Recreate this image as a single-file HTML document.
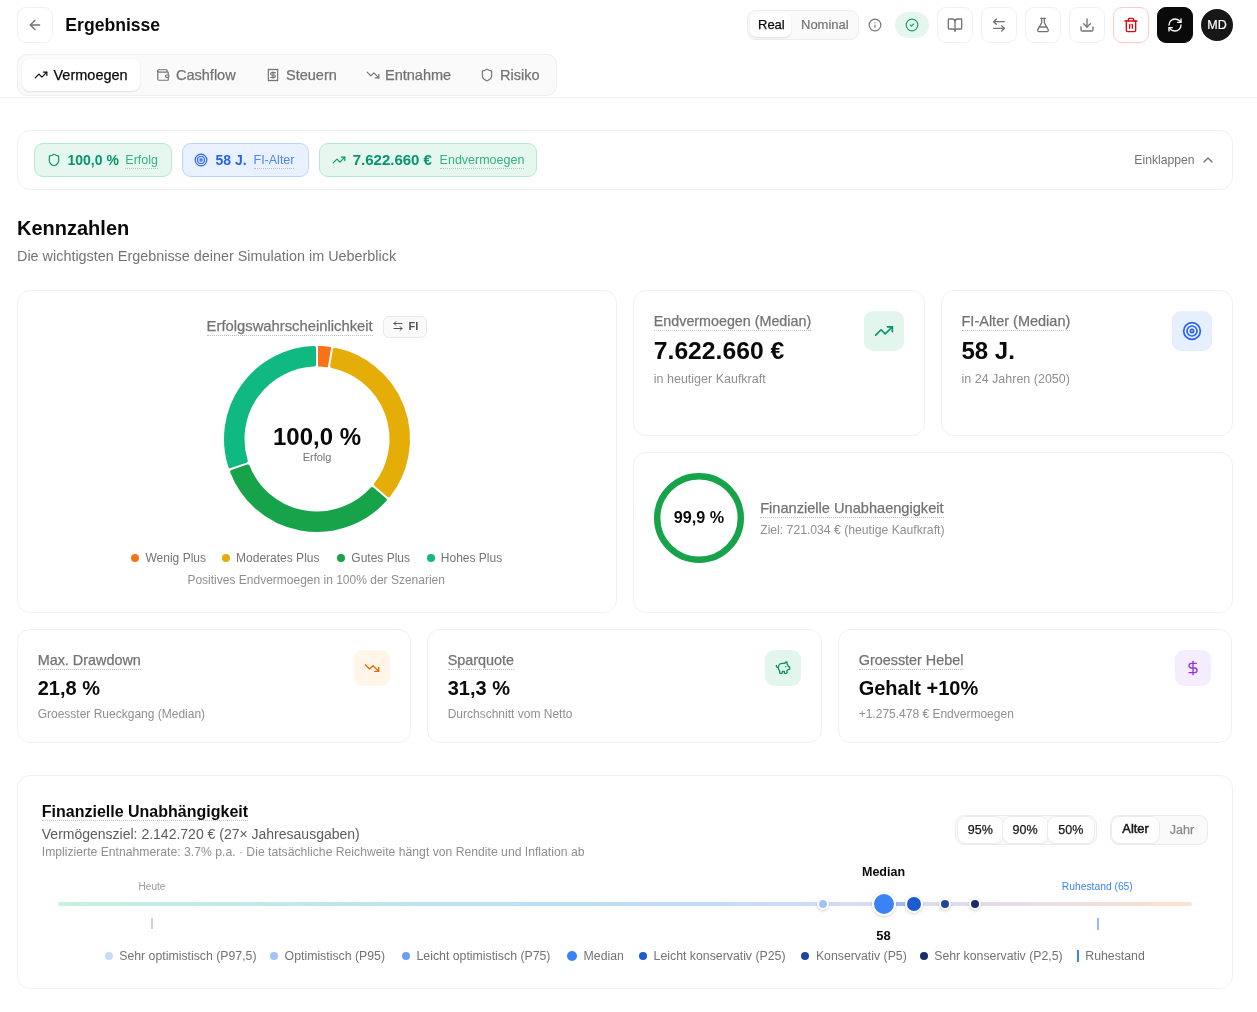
<!DOCTYPE html>
<html lang="de">
<head>
<meta charset="utf-8">
<style>
*{box-sizing:border-box;margin:0;padding:0}
html,body{width:1257px;height:1012px;overflow:hidden;background:#fff}
body{font-family:"Liberation Sans",sans-serif;color:#0a0a0a;position:relative;will-change:transform}
.abs{position:absolute}
svg{display:block}
.ibtn{position:absolute;top:7px;width:36px;height:36px;border:1px solid #f0f0f0;border-radius:9px;background:#fff;display:flex;align-items:center;justify-content:center}
.card{position:absolute;border:1px solid #f0f0f0;border-radius:13px;background:#fff}
.dl{border-bottom:1px dotted #c8c8c8}
.lbl{position:absolute;font-size:14px;color:#737373;white-space:nowrap;line-height:16px}
.val{position:absolute;font-weight:bold;color:#0a0a0a;white-space:nowrap}
.sub{position:absolute;font-size:12px;color:#8f8f8f;white-space:nowrap}
.ibox{position:absolute;border-radius:9px;display:flex;align-items:center;justify-content:center}
.pill{position:absolute;top:13px;height:33px;border-radius:9px;display:flex;align-items:center;white-space:nowrap}
</style>
</head>
<body>

<!-- HEADER -->
<div class="ibtn" style="left:17px;">
<svg width="16" height="16" viewBox="0 0 24 24" fill="none" stroke="#737373" stroke-width="2" stroke-linecap="round" stroke-linejoin="round"><path d="m12 19-7-7 7-7"/><path d="M19 12H5"/></svg>
</div>
<div class="abs" style="left:65.3px;top:14.2px;font-size:17.6px;font-weight:bold;line-height:22px;">Ergebnisse</div>

<!-- tabs -->
<div class="abs" style="left:17px;top:54px;width:540px;height:42px;border:1px solid #efefef;border-radius:10px;background:#fafafa;"></div>
<div class="abs" style="left:22px;top:59px;width:118px;height:32px;border-radius:8px;background:#fff;box-shadow:0 1px 2px rgba(0,0,0,.1);"></div>
<div class="abs" style="left:0;top:97px;width:1257px;height:1px;background:#f0f0f0;"></div>


<!-- toggle real/nominal -->
<div class="abs" style="left:747px;top:10px;width:112px;height:30px;border:1px solid #ededed;border-radius:9px;background:#fafafa;"></div>
<div class="abs" style="left:750px;top:13px;width:41px;height:24px;border-radius:7px;background:#fff;box-shadow:0 1px 2px rgba(0,0,0,.12);"></div>
<div class="abs" style="left:758px;top:17px;font-size:13px;line-height:16px;color:#0a0a0a;-webkit-text-stroke:0.25px currentColor;">Real</div>
<div class="abs" style="left:801px;top:17px;font-size:13px;line-height:16px;color:#737373;-webkit-text-stroke:0.2px currentColor;">Nominal</div>
<div class="abs" style="left:868px;top:18px;">
<svg width="14" height="14" viewBox="0 0 24 24" fill="none" stroke="#737373" stroke-width="2" stroke-linecap="round" stroke-linejoin="round"><circle cx="12" cy="12" r="10"/><path d="M12 16v-4"/><path d="M12 8h.01"/></svg>
</div>
<div class="abs" style="left:895px;top:12px;width:34px;height:26px;border-radius:13px;background:#e5f6ef;display:flex;align-items:center;justify-content:center;">
<svg width="14" height="14" viewBox="0 0 24 24" fill="none" stroke="#16a06c" stroke-width="2" stroke-linecap="round" stroke-linejoin="round"><circle cx="12" cy="12" r="10"/><path d="m9 12 2 2 4-4"/></svg>
</div>
<div class="ibtn" style="left:937px;">
<svg width="16" height="16" viewBox="0 0 24 24" fill="none" stroke="#737373" stroke-width="2" stroke-linecap="round" stroke-linejoin="round"><path d="M12 7v14"/><path d="M3 18a1 1 0 0 1-1-1V4a1 1 0 0 1 1-1h5a4 4 0 0 1 4 4 4 4 0 0 1 4-4h5a1 1 0 0 1 1 1v13a1 1 0 0 1-1 1h-6a3 3 0 0 0-3 3 3 3 0 0 0-3-3z"/></svg>
</div>
<div class="ibtn" style="left:981px;">
<svg width="16" height="16" viewBox="0 0 24 24" fill="none" stroke="#737373" stroke-width="2" stroke-linecap="round" stroke-linejoin="round"><path d="M8 3 4 7l4 4"/><path d="M4 7h16"/><path d="m16 21 4-4-4-4"/><path d="M20 17H4"/></svg>
</div>
<div class="ibtn" style="left:1025px;">
<svg width="16" height="16" viewBox="0 0 24 24" fill="none" stroke="#737373" stroke-width="2" stroke-linecap="round" stroke-linejoin="round"><path d="M14 2v6a2 2 0 0 0 .245.96l5.51 10.08A2 2 0 0 1 18 22H6a2 2 0 0 1-1.755-2.96l5.51-10.08A2 2 0 0 0 10 8V2"/><path d="M6.453 15h11.094"/><path d="M8.5 2h7"/></svg>
</div>
<div class="ibtn" style="left:1069px;">
<svg width="16" height="16" viewBox="0 0 24 24" fill="none" stroke="#737373" stroke-width="2" stroke-linecap="round" stroke-linejoin="round"><path d="M21 15v4a2 2 0 0 1-2 2H5a2 2 0 0 1-2-2v-4"/><polyline points="7 10 12 15 17 10"/><line x1="12" x2="12" y1="15" y2="3"/></svg>
</div>
<div class="ibtn" style="left:1113px;border-color:#fecaca;">
<svg width="16" height="16" viewBox="0 0 24 24" fill="none" stroke="#e7000b" stroke-width="2" stroke-linecap="round" stroke-linejoin="round"><path d="M3 6h18"/><path d="M19 6v14c0 1-1 2-2 2H7c-1 0-2-1-2-2V6"/><path d="M8 6V4c0-1 1-2 2-2h4c1 0 2 1 2 2v2"/><line x1="10" x2="10" y1="11" y2="17"/><line x1="14" x2="14" y1="11" y2="17"/></svg>
</div>
<div class="ibtn" style="left:1157px;background:#0a0a0a;border-color:#0a0a0a;">
<svg width="16" height="16" viewBox="0 0 24 24" fill="none" stroke="#fff" stroke-width="2" stroke-linecap="round" stroke-linejoin="round"><path d="M3 12a9 9 0 0 1 9-9 9.75 9.75 0 0 1 6.74 2.74L21 8"/><path d="M21 3v5h-5"/><path d="M21 12a9 9 0 0 1-9 9 9.75 9.75 0 0 1-6.74-2.74L3 16"/><path d="M8 16H3v5"/></svg>
</div>
<div class="abs" style="left:1201px;top:9px;width:32px;height:32px;border-radius:50%;background:#171717;color:#fff;font-size:12.5px;line-height:32px;text-align:center;-webkit-text-stroke:0.2px currentColor;">MD</div>

<!-- tab labels -->
<div class="abs" style="left:34px;top:68px;"><svg width="14" height="14" viewBox="0 0 24 24" fill="none" stroke="#0a0a0a" stroke-width="2" stroke-linecap="round" stroke-linejoin="round"><path d="M16 7h6v6"/><path d="m22 7-8.5 8.5-5-5L2 17"/></svg></div>
<div class="abs" style="left:53.5px;top:67px;font-size:14.5px;line-height:17px;-webkit-text-stroke:0.25px currentColor;color:#0a0a0a;">Vermoegen</div>
<div class="abs" style="left:156px;top:68px;"><svg width="14" height="14" viewBox="0 0 24 24" fill="none" stroke="#737373" stroke-width="2" stroke-linecap="round" stroke-linejoin="round"><path d="M19 7V4a1 1 0 0 0-1-1H5a2 2 0 0 0 0 4h15a1 1 0 0 1 1 1v4h-3a2 2 0 0 0 0 4h3a1 1 0 0 0 1-1v-2a1 1 0 0 0-1-1"/><path d="M3 5v14a2 2 0 0 0 2 2h15a1 1 0 0 0 1-1v-4"/></svg></div>
<div class="abs" style="left:176px;top:67px;font-size:14.5px;line-height:17px;-webkit-text-stroke:0.25px currentColor;color:#737373;">Cashflow</div>
<div class="abs" style="left:266px;top:68px;"><svg width="14" height="14" viewBox="0 0 24 24" fill="none" stroke="#737373" stroke-width="2" stroke-linecap="round" stroke-linejoin="round"><path d="M4 2v20l2-1 2 1 2-1 2 1 2-1 2 1 2-1 2 1V2l-2 1-2-1-2 1-2-1-2 1-2-1-2 1Z"/><path d="M16 8h-6a2 2 0 1 0 0 4h4a2 2 0 1 1 0 4H8"/><path d="M12 17.5v-11"/></svg></div>
<div class="abs" style="left:286px;top:67px;font-size:14.5px;line-height:17px;-webkit-text-stroke:0.25px currentColor;color:#737373;">Steuern</div>
<div class="abs" style="left:366px;top:68px;"><svg width="14" height="14" viewBox="0 0 24 24" fill="none" stroke="#737373" stroke-width="2" stroke-linecap="round" stroke-linejoin="round"><path d="M16 17h6v-6"/><path d="m22 17-8.5-8.5-5 5L2 7"/></svg></div>
<div class="abs" style="left:385px;top:67px;font-size:14.5px;line-height:17px;-webkit-text-stroke:0.25px currentColor;color:#737373;">Entnahme</div>
<div class="abs" style="left:480px;top:68px;"><svg width="14" height="14" viewBox="0 0 24 24" fill="none" stroke="#737373" stroke-width="2" stroke-linecap="round" stroke-linejoin="round"><path d="M20 13c0 5-3.5 7.5-7.66 8.95a1 1 0 0 1-.67-.01C7.5 20.5 4 18 4 13V6a1 1 0 0 1 1-1c2 0 4.5-1.2 6.24-2.72a1.17 1.17 0 0 1 1.52 0C14.51 3.81 17 5 19 5a1 1 0 0 1 1 1z"/></svg></div>
<div class="abs" style="left:500px;top:67px;font-size:14.5px;line-height:17px;-webkit-text-stroke:0.25px currentColor;color:#737373;">Risiko</div>


<!-- SUMMARY BAR -->
<div class="card" style="left:17px;top:130px;width:1216px;height:60px;"></div>
<div class="abs" style="left:34px;top:143px;width:138px;height:34px;border:1px solid #b3e9d1;border-radius:9px;background:#e6f7f0;"></div>
<div class="abs" style="left:47px;top:153px;"><svg width="14" height="14" viewBox="0 0 24 24" fill="none" stroke="#059669" stroke-width="2" stroke-linecap="round" stroke-linejoin="round"><path d="M20 13c0 5-3.5 7.5-7.66 8.95a1 1 0 0 1-.67-.01C7.5 20.5 4 18 4 13V6a1 1 0 0 1 1-1c2 0 4.5-1.2 6.24-2.72a1.17 1.17 0 0 1 1.52 0C14.51 3.81 17 5 19 5a1 1 0 0 1 1 1z"/></svg></div>
<div class="abs" style="left:67.5px;top:153px;font-size:14px;line-height:1;color:#059669;white-space:nowrap;font-weight:bold;">100,0 %</div>
<div class="abs" style="left:125.3px;top:154px;font-size:12.5px;line-height:1;color:#34b086;white-space:nowrap;"><span style="border-bottom:1px dotted #a8c9bd;padding-bottom:1px;">Erfolg</span></div>
<div class="abs" style="left:182px;top:143px;width:127px;height:34px;border:1px solid #bcd3fb;border-radius:9px;background:#e9f1fe;"></div>
<div class="abs" style="left:194px;top:153px;"><svg width="14" height="14" viewBox="0 0 24 24" fill="none" stroke="#2563eb" stroke-width="2" stroke-linecap="round" stroke-linejoin="round"><circle cx="12" cy="12" r="10"/><circle cx="12" cy="12" r="6"/><circle cx="12" cy="12" r="2"/></svg></div>
<div class="abs" style="left:215.5px;top:153px;font-size:14px;line-height:1;color:#2563eb;white-space:nowrap;font-weight:bold;">58 J.</div>
<div class="abs" style="left:253.5px;top:154px;font-size:12.5px;line-height:1;color:#4f83f1;white-space:nowrap;"><span style="border-bottom:1px dotted #a9bde8;padding-bottom:1px;">FI-Alter</span></div>
<div class="abs" style="left:319px;top:143px;width:218px;height:34px;border:1px solid #b3e9d1;border-radius:9px;background:#e6f7f0;"></div>
<div class="abs" style="left:331.5px;top:153px;"><svg width="14" height="14" viewBox="0 0 24 24" fill="none" stroke="#059669" stroke-width="2" stroke-linecap="round" stroke-linejoin="round"><path d="M16 7h6v6"/><path d="m22 7-8.5 8.5-5-5L2 17"/></svg></div>
<div class="abs" style="left:352.7px;top:152px;font-size:15px;line-height:1;color:#059669;white-space:nowrap;font-weight:bold;">7.622.660 €</div>
<div class="abs" style="left:439.6px;top:154px;font-size:12.5px;line-height:1;color:#34b086;white-space:nowrap;"><span style="border-bottom:1px dotted #a8c9bd;padding-bottom:1px;">Endvermoegen</span></div>
<div class="abs" style="left:1134.3px;top:154px;font-size:12.2px;line-height:1;color:#737373;white-space:nowrap;">Einklappen</div>
<div class="abs" style="left:1200px;top:152px;"><svg width="16" height="16" viewBox="0 0 24 24" fill="none" stroke="#737373" stroke-width="2" stroke-linecap="round" stroke-linejoin="round"><path d="m18 15-6-6-6 6"/></svg></div>
<div class="abs" style="left:17px;top:218px;font-size:20px;line-height:1;color:#0a0a0a;white-space:nowrap;font-weight:bold;">Kennzahlen</div>
<div class="abs" style="left:17px;top:249px;font-size:14.4px;line-height:1;color:#737373;white-space:nowrap;">Die wichtigsten Ergebnisse deiner Simulation im Ueberblick</div>

<!-- DONUT CARD -->
<div class="card" style="left:17px;top:290px;width:600px;height:323px;"></div>
<div class="abs" style="left:206.6px;top:319px;font-size:14.8px;line-height:1;color:#737373;white-space:nowrap;-webkit-text-stroke:0.25px currentColor;"><span style="border-bottom:1px dotted #bdbdbd;padding-bottom:1px;">Erfolgswahrscheinlichkeit</span></div>
<div class="abs" style="left:383px;top:315.5px;width:44px;height:22px;border:1px solid #e8e8e8;border-radius:6px;background:#fafafa;"></div>
<div class="abs" style="left:392px;top:320px;"><svg width="12" height="12" viewBox="0 0 24 24" fill="none" stroke="#525252" stroke-width="2" stroke-linecap="round" stroke-linejoin="round"><path d="M8 3 4 7l4 4"/><path d="M4 7h16"/><path d="m16 21 4-4-4-4"/><path d="M20 17H4"/></svg></div>
<div class="abs" style="left:408.5px;top:321px;font-size:11px;line-height:1;color:#525252;white-space:nowrap;font-weight:bold;">FI</div>
<svg class="abs" style="left:217px;top:338.7px;" width="200" height="200" viewBox="0 0 200 200"><path d="M101.60 7.61A92.4 92.4 0 0 1 113.51 8.59L110.36 27.64A73.1 73.1 0 0 0 101.60 26.92Z" fill="#f97316" stroke="#f97316" stroke-width="1.2" stroke-linejoin="round"/><path d="M117.81 10.76A91 91 0 0 1 171.60 156.16L158.95 145.55A74.5 74.5 0 0 0 115.12 27.05Z" fill="#e5ad08" stroke="#e5ad08" stroke-width="4" stroke-linejoin="round"/><path d="M167.74 160.76A91 91 0 0 1 15.15 132.89L30.74 127.43A74.5 74.5 0 0 0 155.10 150.15Z" fill="#16a34a" stroke="#16a34a" stroke-width="4" stroke-linejoin="round"/><path d="M13.17 127.23A91 91 0 0 1 97.00 9.05L97.00 25.56A74.5 74.5 0 0 0 28.75 121.77Z" fill="#10b981" stroke="#10b981" stroke-width="4" stroke-linejoin="round"/></svg>
<div class="abs" style="left:17px;width:600px;text-align:center;top:425px;font-size:24px;line-height:1;color:#0a0a0a;white-space:nowrap;font-weight:bold;">100,0 %</div>
<div class="abs" style="left:17px;width:600px;text-align:center;top:452px;font-size:11px;line-height:1;color:#737373;white-space:nowrap;">Erfolg</div>
<div class="abs" style="left:131px;top:554px;width:8px;height:8px;border-radius:50%;background:#f97316;"></div>
<div class="abs" style="left:145.5px;top:552px;font-size:12px;line-height:1;color:#737373;white-space:nowrap;">Wenig Plus</div>
<div class="abs" style="left:222px;top:554px;width:8px;height:8px;border-radius:50%;background:#e5ad08;"></div>
<div class="abs" style="left:236.1px;top:552px;font-size:12px;line-height:1;color:#737373;white-space:nowrap;">Moderates Plus</div>
<div class="abs" style="left:336.5px;top:554px;width:8px;height:8px;border-radius:50%;background:#16a34a;"></div>
<div class="abs" style="left:351.3px;top:552px;font-size:12px;line-height:1;color:#737373;white-space:nowrap;">Gutes Plus</div>
<div class="abs" style="left:426.9px;top:554px;width:8px;height:8px;border-radius:50%;background:#10b981;"></div>
<div class="abs" style="left:440.8px;top:552px;font-size:12px;line-height:1;color:#737373;white-space:nowrap;">Hohes Plus</div>
<div class="abs" style="left:16.19999999999999px;width:600px;text-align:center;top:574px;font-size:12px;line-height:1;color:#8f8f8f;white-space:nowrap;">Positives Endvermoegen in 100% der Szenarien</div>

<!-- RIGHT CARDS -->
<div class="card" style="left:633px;top:290px;width:292px;height:146px;"></div>
<div class="abs" style="left:653.8px;top:314px;font-size:14.3px;line-height:1;color:#737373;white-space:nowrap;-webkit-text-stroke:0.25px currentColor;"><span style="border-bottom:1px dotted #bdbdbd;padding-bottom:1px;">Endvermoegen (Median)</span></div>
<div class="abs" style="left:653.8px;top:339px;font-size:24.7px;line-height:1;color:#0a0a0a;white-space:nowrap;font-weight:bold;">7.622.660 €</div>
<div class="abs" style="left:653.8px;top:373px;font-size:12.5px;line-height:1;color:#8f8f8f;white-space:nowrap;">in heutiger Kaufkraft</div>
<div class="ibox" style="left:864px;top:311px;width:40px;height:40px;background:#e3f6ee;"><svg width="20" height="20" viewBox="0 0 24 24" fill="none" stroke="#059669" stroke-width="2" stroke-linecap="round" stroke-linejoin="round"><path d="M16 7h6v6"/><path d="m22 7-8.5 8.5-5-5L2 17"/></svg></div>
<div class="card" style="left:941px;top:290px;width:292px;height:146px;"></div>
<div class="abs" style="left:961.5px;top:314px;font-size:14.5px;line-height:1;color:#737373;white-space:nowrap;-webkit-text-stroke:0.25px currentColor;"><span style="border-bottom:1px dotted #bdbdbd;padding-bottom:1px;">FI-Alter (Median)</span></div>
<div class="abs" style="left:961.5px;top:339px;font-size:24px;line-height:1;color:#0a0a0a;white-space:nowrap;font-weight:bold;">58 J.</div>
<div class="abs" style="left:961.5px;top:373px;font-size:12.5px;line-height:1;color:#8f8f8f;white-space:nowrap;">in 24 Jahren (2050)</div>
<div class="ibox" style="left:1172px;top:311px;width:40px;height:40px;background:#e6effd;"><svg width="20" height="20" viewBox="0 0 24 24" fill="none" stroke="#2563eb" stroke-width="2" stroke-linecap="round" stroke-linejoin="round"><circle cx="12" cy="12" r="10"/><circle cx="12" cy="12" r="6"/><circle cx="12" cy="12" r="2"/></svg></div>
<div class="card" style="left:633px;top:452px;width:600px;height:161px;"></div>
<svg class="abs" style="left:654px;top:473px;" width="90" height="90" viewBox="0 0 90 90"><circle cx="45" cy="45" r="41.8" fill="none" stroke="#16a34a" stroke-width="6.4"/></svg>
<div class="abs" style="left:399px;width:600px;text-align:center;top:509px;font-size:16.2px;line-height:1;color:#0a0a0a;white-space:nowrap;font-weight:bold;">99,9 %</div>
<div class="abs" style="left:760.2px;top:501px;font-size:14.6px;line-height:1;color:#737373;white-space:nowrap;-webkit-text-stroke:0.25px currentColor;"><span style="border-bottom:1px dotted #bdbdbd;padding-bottom:1px;">Finanzielle Unabhaengigkeit</span></div>
<div class="abs" style="left:760.2px;top:524px;font-size:12.2px;line-height:1;color:#8f8f8f;white-space:nowrap;">Ziel: 721.034 € (heutige Kaufkraft)</div>

<!-- ROW3 -->
<div class="card" style="left:17px;top:629px;width:394px;height:114px;"></div>
<div class="abs" style="left:37.7px;top:653px;font-size:14.4px;line-height:1;color:#737373;white-space:nowrap;-webkit-text-stroke:0.25px currentColor;"><span style="border-bottom:1px dotted #bdbdbd;padding-bottom:1px;">Max. Drawdown</span></div>
<div class="abs" style="left:37.7px;top:678px;font-size:20px;line-height:1;color:#0a0a0a;white-space:nowrap;font-weight:bold;">21,8 %</div>
<div class="abs" style="left:37.7px;top:708px;font-size:12px;line-height:1;color:#8f8f8f;white-space:nowrap;">Groesster Rueckgang (Median)</div>
<div class="ibox" style="left:354px;top:650px;width:36px;height:36px;background:#fff5e8;"><svg width="16" height="16" viewBox="0 0 24 24" fill="none" stroke="#ea6c0a" stroke-width="2" stroke-linecap="round" stroke-linejoin="round"><path d="M16 17h6v-6"/><path d="m22 17-8.5-8.5-5 5L2 7"/></svg></div>
<div class="card" style="left:427px;top:629px;width:395px;height:114px;"></div>
<div class="abs" style="left:447.7px;top:653px;font-size:14.4px;line-height:1;color:#737373;white-space:nowrap;-webkit-text-stroke:0.25px currentColor;"><span style="border-bottom:1px dotted #bdbdbd;padding-bottom:1px;">Sparquote</span></div>
<div class="abs" style="left:447.7px;top:678px;font-size:20px;line-height:1;color:#0a0a0a;white-space:nowrap;font-weight:bold;">31,3 %</div>
<div class="abs" style="left:447.7px;top:708px;font-size:12px;line-height:1;color:#8f8f8f;white-space:nowrap;">Durchschnitt vom Netto</div>
<div class="ibox" style="left:765.3px;top:650px;width:36px;height:36px;background:#e3f6ee;"><svg width="16" height="16" viewBox="0 0 24 24" fill="none" stroke="#059669" stroke-width="2" stroke-linecap="round" stroke-linejoin="round"><path d="M11 17h3v2a1 1 0 0 0 1 1h2a1 1 0 0 0 1-1v-3a3.16 3.16 0 0 0 2-2h1a1 1 0 0 0 1-1v-2a1 1 0 0 0-1-1h-1a5 5 0 0 0-2-4V3a4 4 0 0 0-3.2 1.6l-.3.4H11a6 6 0 0 0-6 6v1a5 5 0 0 0 2 4v3a1 1 0 0 0 1 1h2a1 1 0 0 0 1-1z"/><path d="M16 10h.01"/><path d="M2 8v1a2 2 0 0 0 2 2h1"/></svg></div>
<div class="card" style="left:838px;top:629px;width:394px;height:114px;"></div>
<div class="abs" style="left:858.7px;top:653px;font-size:14.4px;line-height:1;color:#737373;white-space:nowrap;-webkit-text-stroke:0.25px currentColor;"><span style="border-bottom:1px dotted #bdbdbd;padding-bottom:1px;">Groesster Hebel</span></div>
<div class="abs" style="left:858.7px;top:678px;font-size:20px;line-height:1;color:#0a0a0a;white-space:nowrap;font-weight:bold;">Gehalt +10%</div>
<div class="abs" style="left:858.7px;top:708px;font-size:12px;line-height:1;color:#8f8f8f;white-space:nowrap;">+1.275.478 € Endvermoegen</div>
<div class="ibox" style="left:1175.3px;top:650px;width:36px;height:36px;background:#f3edfe;"><svg width="16" height="16" viewBox="0 0 24 24" fill="none" stroke="#9333ea" stroke-width="2" stroke-linecap="round" stroke-linejoin="round"><line x1="12" x2="12" y1="2" y2="22"/><path d="M17 5H9.5a3.5 3.5 0 0 0 0 7h5a3.5 3.5 0 0 1 0 7H6"/></svg></div>

<!-- BOTTOM -->
<div class="card" style="left:17px;top:775px;width:1216px;height:214px;"></div>
<div class="abs" style="left:41.8px;top:804px;font-size:16px;line-height:1;color:#0a0a0a;white-space:nowrap;font-weight:bold;"><span style="border-bottom:1px dotted #c4c4c4;padding-bottom:0px;">Finanzielle Unabhängigkeit</span></div>
<div class="abs" style="left:41.8px;top:827px;font-size:14px;line-height:1;color:#5c5c5c;white-space:nowrap;">Vermögensziel: 2.142.720 € (27× Jahresausgaben)</div>
<div class="abs" style="left:41.8px;top:846px;font-size:12.2px;line-height:1;color:#8f8f8f;white-space:nowrap;">Implizierte Entnahmerate: 3.7% p.a. · Die tatsächliche Reichweite hängt von Rendite und Inflation ab</div>
<div class="abs" style="left:955px;top:815px;width:142px;height:30px;border:1px solid #ececec;border-radius:9px;background:#fafafa;"></div>
<div class="abs" style="left:958px;top:817px;width:44.5px;height:26px;border-radius:8px;background:#fff;box-shadow:0 0 0 1px #ececec,0 1px 2px rgba(0,0,0,.06);"></div>
<div class="abs" style="left:680.25px;width:600px;text-align:center;top:824px;font-size:12.5px;line-height:1;color:#171717;white-space:nowrap;-webkit-text-stroke:0.25px currentColor;">95%</div>
<div class="abs" style="left:1002.5px;top:817px;width:45.0px;height:26px;border-radius:8px;background:#fff;box-shadow:0 0 0 1px #ececec,0 1px 2px rgba(0,0,0,.06);"></div>
<div class="abs" style="left:725.0px;width:600px;text-align:center;top:824px;font-size:12.5px;line-height:1;color:#171717;white-space:nowrap;-webkit-text-stroke:0.25px currentColor;">90%</div>
<div class="abs" style="left:1047.5px;top:817px;width:46.5px;height:26px;border-radius:8px;background:#fff;box-shadow:0 0 0 1px #ececec,0 1px 2px rgba(0,0,0,.06);"></div>
<div class="abs" style="left:770.75px;width:600px;text-align:center;top:824px;font-size:12.5px;line-height:1;color:#171717;white-space:nowrap;-webkit-text-stroke:0.25px currentColor;">50%</div>
<div class="abs" style="left:1109.5px;top:815px;width:98px;height:30px;border:1px solid #ececec;border-radius:9px;background:#fafafa;"></div>
<div class="abs" style="left:1112px;top:817px;width:47px;height:26px;border-radius:8px;background:#fff;box-shadow:0 0 0 1px #ececec,0 1px 2px rgba(0,0,0,.06);"></div>
<div class="abs" style="left:835.5px;width:600px;text-align:center;top:823px;font-size:12.8px;line-height:1;color:#171717;white-space:nowrap;-webkit-text-stroke:0.5px currentColor;">Alter</div>
<div class="abs" style="left:882px;width:600px;text-align:center;top:824px;font-size:12.5px;line-height:1;color:#8a8a8a;white-space:nowrap;-webkit-text-stroke:0.25px currentColor;">Jahr</div>
<div class="abs" style="left:58px;top:902px;width:1134px;height:4px;border-radius:2px;background:linear-gradient(90deg,#c6f2de 0%,#c0e9ea 14%,#bde3f4 35%,#c0dafb 55%,#d0dbf7 67%,#dddbf0 76%,#ebdde6 86%,#fde0ca 100%);"></div>
<div class="abs" style="left:884px;top:902px;width:30px;height:4px;background:#9fbdf5;"></div>
<div class="abs" style="left:138.6px;top:882px;font-size:10px;line-height:1;color:#9a9a9a;white-space:nowrap;">Heute</div>
<div class="abs" style="left:151.3px;top:918px;width:2px;height:11px;background:#cfcfcf;"></div>
<div class="abs" style="left:1061.8px;top:882px;font-size:10.3px;line-height:1;color:#3b82f6;white-space:nowrap;">Ruhestand (65)</div>
<div class="abs" style="left:1096.8px;top:917.5px;width:1.8px;height:12px;background:#9abcf5;"></div>
<div class="abs" style="left:816.65px;top:897.75px;width:12.5px;height:12.5px;border-radius:50%;background:#a4c2f7;border:2px solid #fff;box-shadow:0 1px 3px rgba(0,0,0,.18);"></div>
<div class="abs" style="left:872.00px;top:892.00px;width:24px;height:24px;border-radius:50%;background:#3b82f6;border:2px solid #fff;box-shadow:0 1px 3px rgba(0,0,0,.18);"></div>
<div class="abs" style="left:904.80px;top:895.00px;width:18px;height:18px;border-radius:50%;background:#1d5bd0;border:2px solid #fff;box-shadow:0 1px 3px rgba(0,0,0,.18);"></div>
<div class="abs" style="left:938.90px;top:898.00px;width:12px;height:12px;border-radius:50%;background:#1e4699;border:2px solid #fff;box-shadow:0 1px 3px rgba(0,0,0,.18);"></div>
<div class="abs" style="left:969.00px;top:898.00px;width:12px;height:12px;border-radius:50%;background:#172f66;border:2px solid #fff;box-shadow:0 1px 3px rgba(0,0,0,.18);"></div>
<div class="abs" style="left:583.5px;width:600px;text-align:center;top:866px;font-size:12.5px;line-height:1;color:#0a0a0a;white-space:nowrap;font-weight:bold;">Median</div>
<div class="abs" style="left:583.5px;width:600px;text-align:center;top:929px;font-size:13px;line-height:1;color:#0a0a0a;white-space:nowrap;font-weight:bold;">58</div>
<div class="abs" style="left:104.8px;top:952.0px;width:8px;height:8px;border-radius:50%;background:#c9dbf8;"></div>
<div class="abs" style="left:119.2px;top:950px;font-size:12.3px;line-height:1;color:#737373;white-space:nowrap;">Sehr optimistisch (P97,5)</div>
<div class="abs" style="left:269.9px;top:952.0px;width:8px;height:8px;border-radius:50%;background:#a4c2f7;"></div>
<div class="abs" style="left:284.6px;top:950px;font-size:12.3px;line-height:1;color:#737373;white-space:nowrap;">Optimistisch (P95)</div>
<div class="abs" style="left:401.7px;top:952.0px;width:8px;height:8px;border-radius:50%;background:#6d9ef2;"></div>
<div class="abs" style="left:416.5px;top:950px;font-size:12.3px;line-height:1;color:#737373;white-space:nowrap;">Leicht optimistisch (P75)</div>
<div class="abs" style="left:566.8px;top:951.0px;width:10px;height:10px;border-radius:50%;background:#3b82f6;"></div>
<div class="abs" style="left:583.6px;top:950px;font-size:12.3px;line-height:1;color:#737373;white-space:nowrap;">Median</div>
<div class="abs" style="left:638.5px;top:952.0px;width:8px;height:8px;border-radius:50%;background:#1d5bd0;"></div>
<div class="abs" style="left:653.6px;top:950px;font-size:12.3px;line-height:1;color:#737373;white-space:nowrap;">Leicht konservativ (P25)</div>
<div class="abs" style="left:800.7px;top:952.0px;width:8px;height:8px;border-radius:50%;background:#1e4699;"></div>
<div class="abs" style="left:815.9px;top:950px;font-size:12.3px;line-height:1;color:#737373;white-space:nowrap;">Konservativ (P5)</div>
<div class="abs" style="left:919.9px;top:952.0px;width:8px;height:8px;border-radius:50%;background:#172f66;"></div>
<div class="abs" style="left:934.2px;top:950px;font-size:12.3px;line-height:1;color:#737373;white-space:nowrap;">Sehr konservativ (P2,5)</div>
<div class="abs" style="left:1077px;top:950px;width:2px;height:12px;background:#3b82f6;"></div>
<div class="abs" style="left:1085.3px;top:950px;font-size:12.3px;line-height:1;color:#737373;white-space:nowrap;">Ruhestand</div>

</body>
</html>
